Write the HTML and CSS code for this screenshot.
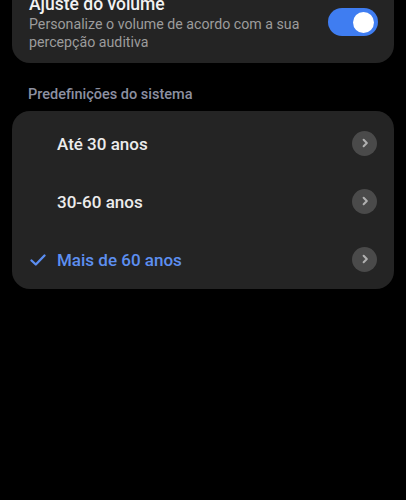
FILE: index.html
```html
<!DOCTYPE html>
<html lang="pt">
<head>
<meta charset="utf-8">
<link rel="stylesheet" href="styles.css">
</head>
<body>
<div class="page">
  <section class="card top-card">
    <div class="setting">
      <div class="setting-text">
        <div class="setting-title">Ajuste do volume</div>
        <div class="setting-sub">Personalize o volume de acordo com a sua percepção auditiva</div>
      </div>
      <div class="switch on"><span class="knob"></span></div>
    </div>
  </section>

  <h2 class="section-label">Predefinições do sistema</h2>

  <section class="card list-card">
    <div class="row">
      <span class="row-label">Até 30 anos</span>
      <span class="go"><svg viewBox="0 0 24 24" width="24" height="24"><path d="M10.5 8.5 L14 12 L10.5 15.5" fill="none" stroke="#b0b0b0" stroke-width="2.2" stroke-linecap="round" stroke-linejoin="round"/></svg></span>
    </div>
    <div class="row">
      <span class="row-label">30-60 anos</span>
      <span class="go"><svg viewBox="0 0 24 24" width="24" height="24"><path d="M10.5 8.5 L14 12 L10.5 15.5" fill="none" stroke="#b0b0b0" stroke-width="2.2" stroke-linecap="round" stroke-linejoin="round"/></svg></span>
    </div>
    <div class="row selected">
      <svg class="check" viewBox="0 0 16 12" width="16" height="12"><path d="M1.5 6.5 L5.8 10.5 L14.5 1.5" fill="none" stroke="#5b8ef2" stroke-width="2.3" stroke-linecap="round" stroke-linejoin="round"/></svg>
      <span class="row-label">Mais de 60 anos</span>
      <span class="go"><svg viewBox="0 0 24 24" width="24" height="24"><path d="M10.5 8.5 L14 12 L10.5 15.5" fill="none" stroke="#b0b0b0" stroke-width="2.2" stroke-linecap="round" stroke-linejoin="round"/></svg></span>
    </div>
  </section>
</div>
</body>
</html>
```

FILE: styles.css
```css
html, body {
  margin: 0;
  padding: 0;
  background: #000;
}
body {
  font-family: Roboto, "Noto Sans", "Liberation Sans", sans-serif;
  color: #f0f0f0;
  width: 406px;
  height: 500px;
  overflow: hidden;
}
.page {
  display: flex;
  flex-direction: column;
}
.card {
  background: #242424;
  border-radius: 18px;
  margin: 0 12px;
}
.top-card {
  margin-top: -23px;
  padding: 16px 16px 12px 17px;
}
.setting {
  display: flex;
  align-items: center;
  gap: 6px;
}
.setting-text {
  flex: 1;
  min-width: 0;
}
.setting-title {
  font-size: 17.5px;
  line-height: 22px;
  font-weight: 500;
  color: #f2f2f2;
}
.setting-sub {
  font-size: 14.2px;
  line-height: 18px;
  color: #9c9c9c;
}
.switch {
  width: 50px;
  height: 28px;
  border-radius: 14px;
  background: #3f7df1;
  display: flex;
  align-items: center;
  justify-content: flex-end;
  padding: 0 4px;
  box-sizing: border-box;
  flex: none;
}
.knob {
  width: 21px;
  height: 21px;
  border-radius: 50%;
  background: #fff;
}
.section-label {
  margin: 22px 0 6px;
  padding-left: 28px;
  font-size: 14.5px;
  line-height: 20px;
  font-weight: 500;
  color: #8d90a1;
}
.list-card {
  padding: 3px 0 1px;
}
.row {
  position: relative;
  height: 58px;
  display: flex;
  align-items: center;
  padding: 0 17px 0 45px;
}
.row-label {
  flex: 1;
  font-size: 17px;
  font-weight: 500;
  color: #ececec;
  padding-top: 1px;
}
.selected .row-label {
  color: #5d8ff0;
}
.check {
  position: absolute;
  left: 18px;
  top: 24px;
}
.go {
  width: 25px;
  height: 25px;
  border-radius: 50%;
  background: #4a4a4a;
  display: flex;
  align-items: center;
  justify-content: center;
  flex: none;
}
.go svg {
  width: 22px;
  height: 22px;
}
```
